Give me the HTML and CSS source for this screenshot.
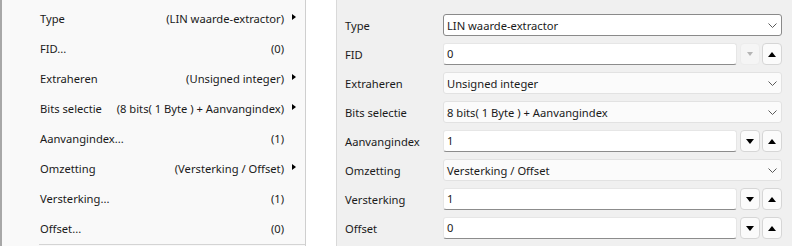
FILE: index.html
```html
<!DOCTYPE html>
<html>
<head>
  <meta charset="UTF-8">
  <title>LIN waarde-extractor</title>
  <link rel="stylesheet" href="styles.css">
</head>
<body>
  <div class="menu">
    <div class="item"><span class="name">Type</span><span class="value">(LIN waarde-extractor)</span><span class="sub"><i class="arrow"></i></span></div>
    <div class="item"><span class="name">FID...</span><span class="value">(0)</span><span class="sub"></span></div>
    <div class="item"><span class="name">Extraheren</span><span class="value">(Unsigned integer)</span><span class="sub"><i class="arrow"></i></span></div>
    <div class="item"><span class="name">Bits selectie</span><span class="value">(8 bits( 1 Byte ) + Aanvangindex)</span><span class="sub"><i class="arrow"></i></span></div>
    <div class="item"><span class="name">Aanvangindex...</span><span class="value">(1)</span><span class="sub"></span></div>
    <div class="item"><span class="name">Omzetting</span><span class="value">(Versterking / Offset)</span><span class="sub"><i class="arrow"></i></span></div>
    <div class="item"><span class="name">Versterking...</span><span class="value">(1)</span><span class="sub"></span></div>
    <div class="item"><span class="name">Offset...</span><span class="value">(0)</span><span class="sub"></span></div>
    <div class="sep"></div>
  </div>

  <div class="gutter"></div>

  <div class="panel">
    <div class="row">
      <label>Type</label>
      <div class="select active"><span>LIN waarde-extractor</span><svg width="9" height="5" viewBox="0 0 9 5"><polyline points="0.5,0.5 4.5,4.5 8.5,0.5" fill="none" stroke="#5a5a5a" stroke-width="1"/></svg></div>
    </div>
    <div class="row">
      <label>FID</label>
      <div class="number">
        <div class="input">0</div>
        <button class="spin disabled"><i class="down"></i></button>
        <button class="spin"><i class="up"></i></button>
      </div>
    </div>
    <div class="row">
      <label>Extraheren</label>
      <div class="select"><span>Unsigned integer</span><svg width="9" height="5" viewBox="0 0 9 5"><polyline points="0.5,0.5 4.5,4.5 8.5,0.5" fill="none" stroke="#5a5a5a" stroke-width="1"/></svg></div>
    </div>
    <div class="row">
      <label>Bits selectie</label>
      <div class="select"><span>8 bits( 1 Byte ) + Aanvangindex</span><svg width="9" height="5" viewBox="0 0 9 5"><polyline points="0.5,0.5 4.5,4.5 8.5,0.5" fill="none" stroke="#5a5a5a" stroke-width="1"/></svg></div>
    </div>
    <div class="row">
      <label>Aanvangindex</label>
      <div class="number">
        <div class="input">1</div>
        <button class="spin"><i class="down"></i></button>
        <button class="spin"><i class="up"></i></button>
      </div>
    </div>
    <div class="row">
      <label>Omzetting</label>
      <div class="select"><span>Versterking / Offset</span><svg width="9" height="5" viewBox="0 0 9 5"><polyline points="0.5,0.5 4.5,4.5 8.5,0.5" fill="none" stroke="#5a5a5a" stroke-width="1"/></svg></div>
    </div>
    <div class="row">
      <label>Versterking</label>
      <div class="number">
        <div class="input">1</div>
        <button class="spin"><i class="down"></i></button>
        <button class="spin"><i class="up"></i></button>
      </div>
    </div>
    <div class="row">
      <label>Offset</label>
      <div class="number">
        <div class="input">0</div>
        <button class="spin"><i class="down"></i></button>
        <button class="spin"><i class="up"></i></button>
      </div>
    </div>
  </div>
</body>
</html>
```

FILE: styles.css
```css
body {
  font-family: "Noto Sans", "Open Sans", sans-serif;
  font-size: 11.2px;
  color: #1a1a1a;
  margin: 0;
  height: 246px;
  overflow: hidden;
  display: flex;
  background: #fff;
  white-space: nowrap;
}

.menu {
  width: 303px;
  flex-shrink: 0;
  background: #f9f9f9;
  border-left: 2px solid #a8a8a8;
  border-right: 1px solid #cfcfcf;
  padding-top: 3px;
}

.item {
  display: flex;
  align-items: center;
  height: 30px;
  padding-left: 38px;
}

.item .value {
  margin-left: auto;
}

.item .sub {
  width: 21px;
  display: flex;
  align-items: center;
  padding-left: 8px;
  box-sizing: border-box;
}

.arrow {
  display: block;
  width: 0;
  height: 0;
  border-left: 4px solid #000;
  border-top: 3.5px solid transparent;
  border-bottom: 3.5px solid transparent;
  margin-top: -2px;
}

.sep {
  margin-left: 37px;
  margin-top: 1px;
  height: 1px;
  background: #d4d4d4;
}

.gutter {
  width: 30px;
  flex-shrink: 0;
  background: #fff;
}

.panel {
  flex: 1;
  background: #f0f0f0;
  border-left: 1px solid #d9d9d9;
  padding: 14px 10px 0 8px;
  display: flex;
  flex-direction: column;
  gap: 7px;
}

.row {
  display: grid;
  grid-template-columns: 98px 1fr;
  align-items: center;
  height: 22px;
}

.select {
  height: 22px;
  box-sizing: border-box;
  display: flex;
  align-items: center;
  justify-content: space-between;
  padding: 0 4px 0 3px;
  background: #fbfbfb;
  border: 1px solid #e2e2e2;
  border-radius: 3px;
}

.select.active {
  background: #fff;
  border-color: #8a8a8a;
}

.number {
  display: flex;
  height: 22px;
}

.input {
  flex: 1;
  box-sizing: border-box;
  background: #fff;
  border: 1px solid #e6e6e6;
  border-bottom-color: #8c8c8c;
  border-radius: 3px;
  padding: 0 3px;
  line-height: 20px;
  margin-right: 3px;
}

.spin {
  width: 20px;
  height: 22px;
  margin: 0 0 0 2px;
  padding: 0;
  background: #fbfbfb;
  border: 1px solid #d6d6d6;
  border-radius: 4px;
  display: flex;
  align-items: center;
  justify-content: center;
}

.spin:first-of-type {
  margin-left: 0;
}

.spin.disabled {
  background: #f5f5f5;
  border-color: #ececec;
}

.up, .down {
  display: block;
  width: 0;
  height: 0;
  border-left: 4px solid transparent;
  border-right: 4px solid transparent;
}

.up {
  border-bottom: 5px solid #000;
}

.down {
  border-top: 5px solid #000;
}

.disabled .down {
  border-left-width: 3px;
  border-right-width: 3px;
  border-top: 4px solid #b5b5b5;
}
```
